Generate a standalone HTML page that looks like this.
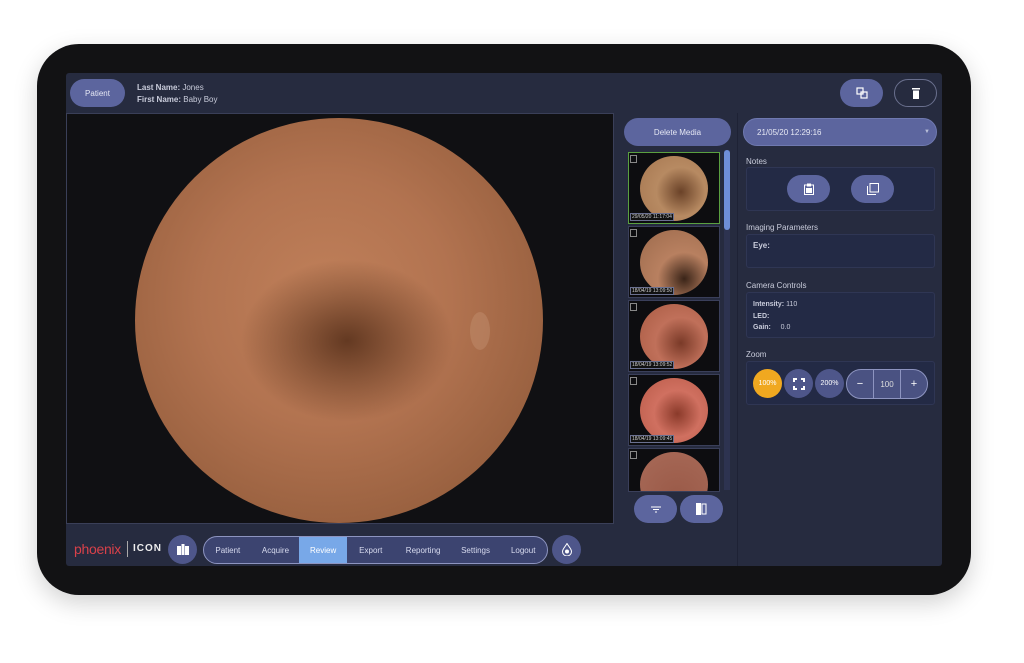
<!DOCTYPE html>
<html><head><style>
*{margin:0;padding:0;box-sizing:border-box}
body{width:1024px;height:663px;background:#fff;position:relative;overflow:hidden;font-family:"Liberation Sans",sans-serif;color:#d8dbe8}
.dev{position:absolute;left:37px;top:44px;width:934px;height:551px;background:#121214;border-radius:42px;box-shadow:0 8px 24px rgba(0,0,0,.18)}
.scr{position:absolute;left:66px;top:73px;width:876px;height:493px;background:#262b3f;border-radius:3px;overflow:hidden}
.a{position:absolute}
.btn{position:absolute;background:#5c659e;border-radius:16px;color:#e6e8f4;font-size:8px;display:flex;align-items:center;justify-content:center}
.lbl{position:absolute;font-size:8px;color:#c9ccdb}
.box{position:absolute;background:#232a45;border:1px solid #2f3654;border-radius:3px}
.thumb{position:absolute;left:628px;width:92px;height:72px;background:#0d0d10;border:1px solid #3a3f5a;overflow:hidden}
.thumb .c{position:absolute;left:11px;top:3px;width:68px;height:65px;border-radius:50%}
.thumb .d{position:absolute;left:1px;bottom:2px;font-size:5px;border:1px solid #6a7090;padding:0 1px;color:#ccc;background:#111}
.thumb .t{position:absolute;left:1px;top:2px;width:7px;height:8px;border:1px solid #888}
.nav{position:absolute;left:203px;top:536px;width:345px;height:28px;border:1.5px solid #8d94c0;border-radius:14px;background:#3c4470;overflow:hidden;display:flex;font-size:8px}
.nav div{flex:1;display:flex;align-items:center;justify-content:center;color:#d8dbef}
.rb{position:absolute;width:29px;height:29px;border-radius:50%;background:#4e568a;display:flex;align-items:center;justify-content:center;color:#fff}
</style></head><body>
<div class="dev"></div>
<div class="scr"></div>
<div class="btn" style="left:70px;top:79px;width:55px;height:28px;border-radius:14px">Patient</div>
<div class="lbl" style="left:137px;top:83px"><b>Last Name:</b> Jones</div>
<div class="lbl" style="left:137px;top:95px"><b>First Name:</b> Baby Boy</div>
<div class="btn" style="left:840px;top:79px;width:43px;height:28px;border-radius:14px"><svg width="12" height="12" viewBox="0 0 12 12" fill="none" stroke="#fff" stroke-width="1.2"><rect x="1" y="1" width="6" height="6"/><rect x="5" y="5" width="6" height="6"/></svg></div>
<div class="btn" style="left:894px;top:79px;width:43px;height:28px;border-radius:14px;background:#262b3f;border:1px solid #6a708e"><svg width="8" height="11" viewBox="0 0 8 11"><rect x="0" y="0" width="8" height="1.5" fill="#fff"/><rect x="1" y="2.5" width="6" height="8.5" fill="#fff"/></svg></div>
<div class="a" style="left:66px;top:113px;width:548px;height:411px;background:#101013;border:1px solid #3a3f58"></div>
<div class="a" style="left:135px;top:118px;width:408px;height:405px;border-radius:50%;background:radial-gradient(ellipse 26% 20% at 52% 55%,rgba(90,50,28,.9) 0%,rgba(120,70,40,0) 100%),radial-gradient(circle at 47% 45%,#c0805a 0%,#b27350 40%,#98603f 75%,#704329 100%)"></div>
<div class="a" style="left:470px;top:312px;width:20px;height:38px;border-radius:50%;background:#c49070;opacity:.45"></div>
<div class="btn" style="left:624px;top:118px;width:107px;height:28px;border-radius:14px">Delete Media</div>
<div class="a" style="left:724px;top:150px;width:6px;height:340px;background:#2d3350"></div>
<div class="a" style="left:724px;top:150px;width:6px;height:80px;background:#6e8ed8;border-radius:3px"></div>
<div class="thumb" style="top:152px;border:1.5px solid #5aa040"><div class="c" style="background:radial-gradient(circle at 60% 55%,#6a4228 0%,#b78a62 45%,#a57650 100%)"></div><div class="t"></div><div class="d">29/05/20 11:17:04</div></div>
<div class="thumb" style="top:226px"><div class="c" style="background:radial-gradient(circle at 65% 75%,#3a2418 0%,#b88060 40%,#9c6a4c 100%)"></div><div class="t"></div><div class="d">18/04/19 13:09:50</div></div>
<div class="thumb" style="top:300px"><div class="c" style="background:radial-gradient(circle at 60% 60%,#7a3a28 0%,#c0705a 45%,#a85a42 100%)"></div><div class="t"></div><div class="d">18/04/19 13:09:52</div></div>
<div class="thumb" style="top:374px"><div class="c" style="background:radial-gradient(circle at 55% 55%,#8a3a2a 0%,#d07060 45%,#b85a48 100%)"></div><div class="t"></div><div class="d">18/04/19 13:09:45</div></div>
<div class="thumb" style="top:448px;height:44px"><div class="c" style="background:radial-gradient(circle at 55% 70%,#9a5a48 0%,#a86a58 100%)"></div><div class="t"></div></div>
<div class="btn" style="left:634px;top:495px;width:43px;height:28px;border-radius:14px"><svg width="10" height="7" viewBox="0 0 10 7" stroke="#fff"><path d="M0 1h10M2 3.5h6M4 6h2"/></svg></div>
<div class="btn" style="left:680px;top:495px;width:43px;height:28px;border-radius:14px"><svg width="11" height="12" viewBox="0 0 11 12"><rect x="0" y="0" width="5" height="12" fill="#fff"/><rect x="6" y="1" width="4" height="10" fill="none" stroke="#fff"/></svg></div>
<div class="a" style="left:737px;top:113px;width:1px;height:453px;background:#1e2235"></div>
<div class="btn" style="left:743px;top:118px;width:194px;height:28px;border-radius:14px;justify-content:flex-start;padding-left:13px;border:1px solid #6f79b0">21/05/20 12:29:16<span style="position:absolute;right:6px;font-size:6px;color:#b8bed8">▼</span></div>
<div class="lbl" style="left:746px;top:157px">Notes</div>
<div class="box" style="left:746px;top:167px;width:189px;height:44px"></div>
<div class="btn" style="left:787px;top:175px;width:43px;height:28px;border-radius:14px"><svg width="10" height="12" viewBox="0 0 10 12"><rect x="0.5" y="2" width="9" height="9.5" fill="none" stroke="#fff"/><rect x="3" y="0.5" width="4" height="3" fill="#fff"/><rect x="2" y="5" width="6" height="5" fill="#fff"/></svg></div>
<div class="btn" style="left:851px;top:175px;width:43px;height:28px;border-radius:14px"><svg width="12" height="12" viewBox="0 0 12 12" fill="none" stroke="#fff"><rect x="3" y="0.5" width="8.5" height="8.5"/><path d="M0.5 3v8.5h8.5"/></svg></div>
<div class="lbl" style="left:746px;top:223px">Imaging Parameters</div>
<div class="box" style="left:746px;top:234px;width:189px;height:34px"></div>
<div class="lbl" style="left:753px;top:241px"><b>Eye:</b></div>
<div class="lbl" style="left:746px;top:281px">Camera Controls</div>
<div class="box" style="left:746px;top:292px;width:189px;height:46px"></div>
<div class="lbl" style="left:753px;top:299px;font-size:7px;line-height:11.5px"><b>Intensity:</b> 110<br><b>LED:</b><br><b>Gain:</b> &nbsp;&nbsp;&nbsp;&nbsp;0.0</div>
<div class="lbl" style="left:746px;top:350px">Zoom</div>
<div class="box" style="left:746px;top:361px;width:189px;height:44px"></div>
<div class="rb" style="left:753px;top:369px;background:#f0a820;font-size:7px">100%</div>
<div class="rb" style="left:784px;top:369px"><svg width="12" height="12" viewBox="0 0 12 12" fill="none" stroke="#fff" stroke-width="2"><path d="M1 4V1h3M8 1h3v3M11 8v3H8M4 11H1V8"/></svg></div>
<div class="rb" style="left:815px;top:369px;font-size:7px">200%</div>
<div class="a" style="left:846px;top:369px;width:82px;height:30px;border:1.5px solid #8d94c0;border-radius:15px;background:#4a5282;display:flex;font-size:8px;overflow:hidden"><div style="flex:1;display:flex;align-items:center;justify-content:center;color:#fff;border-right:1px solid #8d94c0;font-size:11px">−</div><div style="flex:1;display:flex;align-items:center;justify-content:center;color:#ddd;border-right:1px solid #8d94c0">100</div><div style="flex:1;display:flex;align-items:center;justify-content:center;color:#fff;font-size:11px">+</div></div>
<div class="a" style="left:74px;top:541px;font-size:14px;color:#d8414a;letter-spacing:-0.3px">phoenix</div>
<div class="a" style="left:127px;top:541px;width:1px;height:16px;background:#aaa"></div>
<div class="a" style="left:133px;top:543px;font-size:10px;font-weight:bold;color:#eee;letter-spacing:1px">ICON</div>
<div class="rb" style="left:168px;top:535px"><svg width="12" height="11" viewBox="0 0 12 11"><rect x="0" y="2" width="4" height="9" fill="#fff"/><rect x="4.5" y="0" width="3" height="11" fill="#fff"/><rect x="8" y="2" width="4" height="9" fill="#fff"/></svg></div>
<div class="nav"><div>Patient</div><div>Acquire</div><div style="background:#78a8e8;color:#fff">Review</div><div>Export</div><div style="flex:1.2">Reporting</div><div>Settings</div><div>Logout</div></div>
<div class="rb" style="left:552px;top:535px"><svg width="10" height="13" viewBox="0 0 10 13"><path d="M5 0.5C3 4 0.5 6 0.5 8.5a4.5 4.5 0 0 0 9 0C9.5 6 7 4 5 0.5z" fill="none" stroke="#fff"/><circle cx="5" cy="8.5" r="2" fill="#fff"/></svg></div>
</body></html>
